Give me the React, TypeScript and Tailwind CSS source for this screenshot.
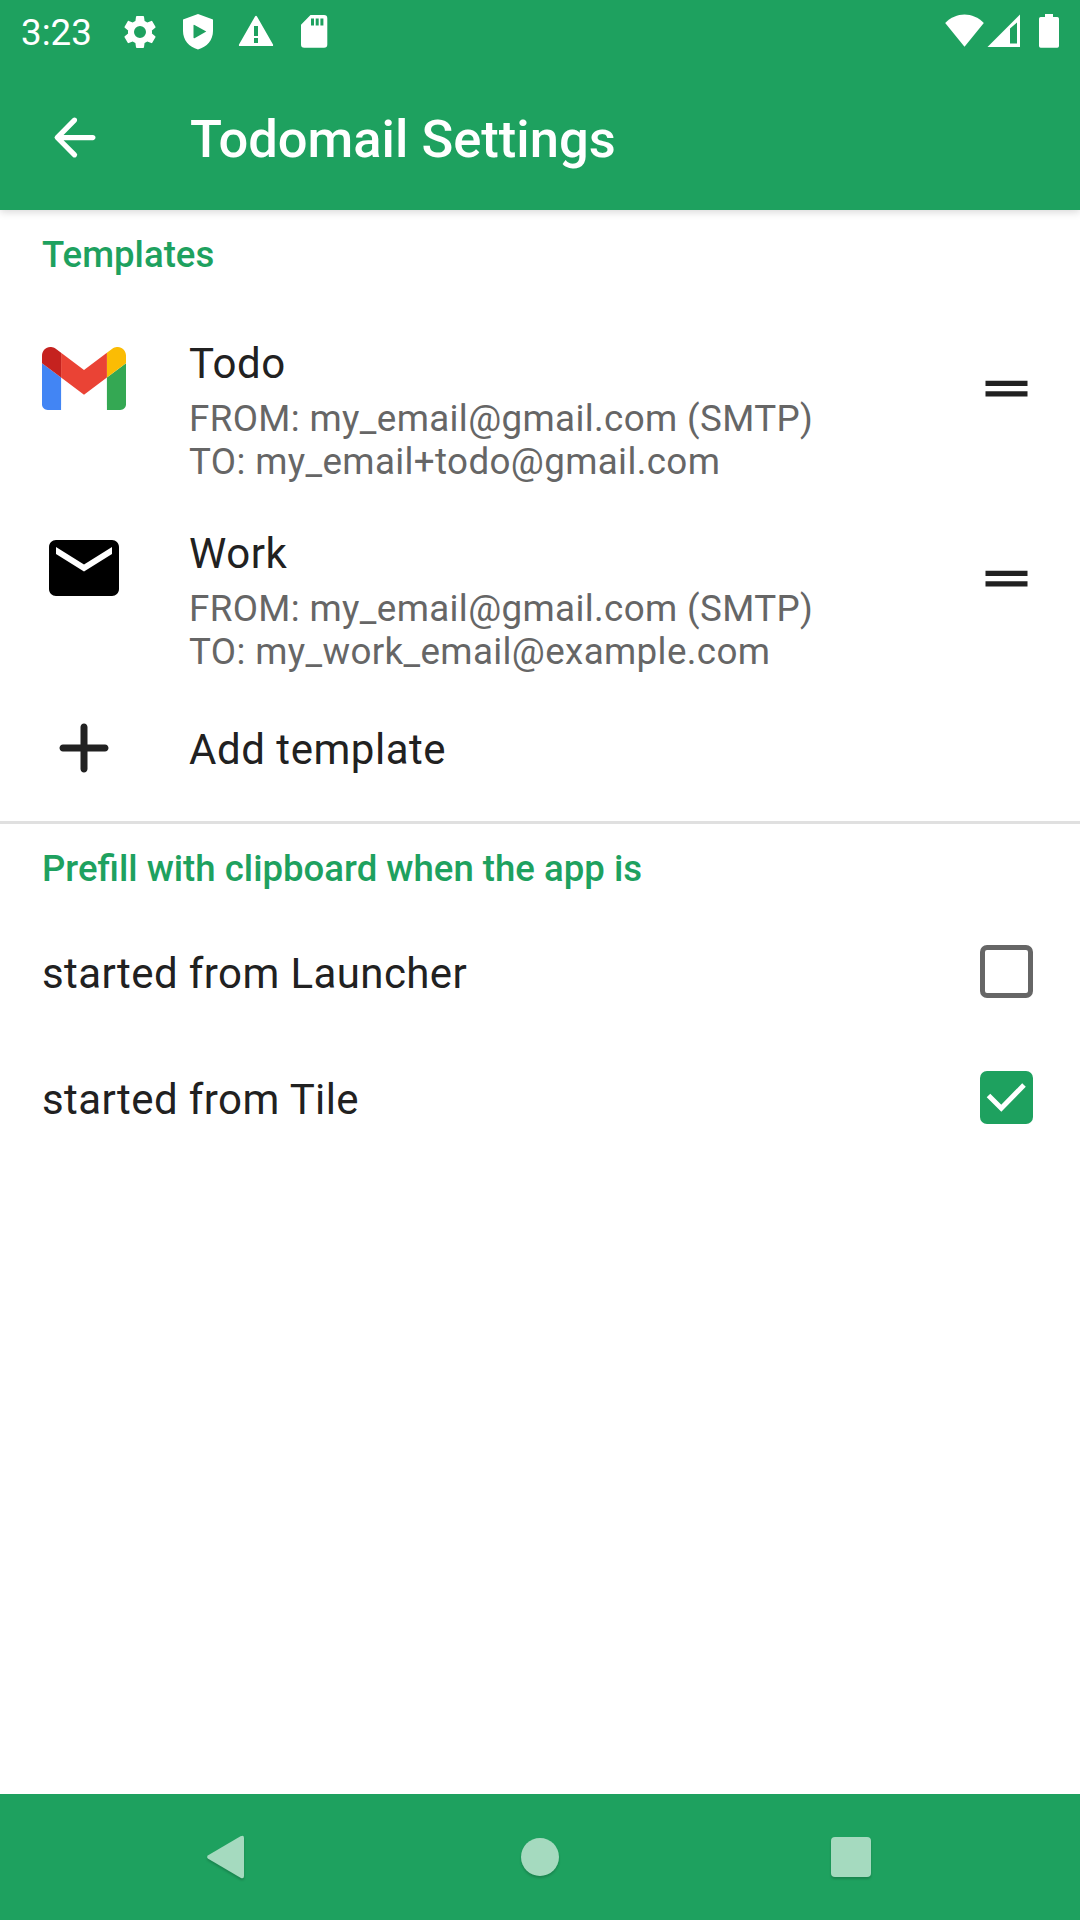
import type { ReactNode } from "react";

function StatusBar() {
  return (
    <div className="z-20 flex h-[63px] shrink-0 items-start bg-[#1ea15f] pr-[21px] pl-[21px] text-white">
      <span className="mt-[12px] w-[99px] text-[36.75px] leading-[42px]">3:23</span>
      <div className="mt-[12px] flex gap-[18px]">
        <svg className="h-10 w-10" viewBox="0 0 24 24" fill="currentColor">
          <path d="M19.14 12.94c.04-.3.06-.61.06-.94 0-.32-.02-.64-.07-.94l2.03-1.58a.49.49 0 0 0 .12-.61l-1.92-3.32a.488.488 0 0 0-.59-.22l-2.39.96c-.5-.38-1.03-.7-1.62-.94l-.36-2.54a.484.484 0 0 0-.48-.41h-3.84c-.24 0-.43.17-.47.41l-.36 2.54c-.59.24-1.13.57-1.62.94l-2.39-.96c-.22-.08-.47 0-.59.22L2.74 8.87c-.12.21-.08.47.12.61l2.03 1.58c-.05.3-.09.63-.09.94s.02.64.07.94l-2.03 1.58a.49.49 0 0 0-.12.61l1.92 3.32c.12.22.37.29.59.22l2.39-.96c.5.38 1.03.7 1.62.94l.36 2.54c.05.24.24.41.48.41h3.84c.24 0 .44-.17.47-.41l.36-2.54c.59-.24 1.13-.56 1.62-.94l2.39.96c.22.08.47 0 .59-.22l1.92-3.32c.12-.22.07-.47-.12-.61l-2.01-1.58zM12 15.6A3.6 3.6 0 1 1 12 8.4a3.6 3.6 0 0 1 0 7.2z" />
        </svg>
        <svg className="h-10 w-10" viewBox="0 0 40 40" fill="currentColor">
          <path fillRule="evenodd" d="M20 2 L5 7.5 V19 C5 28 11 35 20 37.5 C29 35 35 28 35 19 V7.500Z M15.500 13.500 Q15.500 12.500 16.500 13 L28.300 19.500 L16.500 26.200 Q15.500 26.600 15.500 25.500Z" />
        </svg>
        <svg className="h-10 w-10" viewBox="0 0 40 40" fill="currentColor">
          <path fillRule="evenodd" d="M19 4.500 Q20 3.200 21 4.500 L37 32.500 Q37.500 34 36 34 H4 Q2.500 34 3 32.500Z M18 14 V24 H22 V14Z M18 26 V31 H22 V26Z" />
        </svg>
        <svg className="h-10 w-10" viewBox="0 0 40 40" fill="currentColor">
          <path fillRule="evenodd" d="M16.500 3 H30 Q33.300 3 33.300 6.300 V32.500 Q33.300 35.800 30 35.800 H10.300 Q7 35.800 7 32.500 V12.700Z M17 6.500 V13.500 H20 V6.500Z M21.700 6.500 V13.500 H24.700 V6.500Z M26.400 6.500 V13.500 H29.400 V6.500Z" />
        </svg>
      </div>
      <div className="mt-[12px] ml-auto flex">
        <svg className="h-10 w-10" viewBox="0 0 40 40" fill="currentColor">
          <path d="M1.200 11 C12 -.5 29 -.5 39.800 11 L20.500 34.700Z" />
        </svg>
        <svg className="h-10 w-10" viewBox="0 0 40 40" fill="currentColor">
          <path fillRule="evenodd" d="M3.500 35 L36 2.500 V35Z M26 16.500 V31.500 H33 V10.500Z" />
        </svg>
        <svg className="ml-[15px] h-10 w-5" viewBox="0 0 20 40" fill="currentColor">
          <path d="M6 2 H14 V5 H18.300 Q20 5 20 6.700 V34 Q20 35.700 18.300 35.700 H1.700 Q0 35.700 0 34 V6.700 Q0 5 1.700 5 H6Z" />
        </svg>
      </div>
    </div>
  );
}

function AppBar() {
  return (
    <header className="z-10 flex h-[147px] shrink-0 items-center bg-[#1ea15f] pl-[43px] text-white shadow-[0_2px_8px_rgba(0,0,0,0.16)]">
      <svg className="mt-[2px] h-[63px] w-[63px]" viewBox="0 0 24 24" fill="currentColor">
        <path d="M19 11H7.830l4.880-4.880c.390-.390.390-1.030 0-1.420a.996.996 0 0 0-1.410 0l-6.590 6.590a.996.996 0 0 0 0 1.410l6.590 6.590a.996.996 0 1 0 1.410-1.410L7.830 13H19c.550 0 1-.450 1-1s-.450-1-1-1z" />
      </svg>
      <h1 className="mt-[5px] ml-[84px] text-[52.5px] leading-[62px] font-medium">Todomail Settings</h1>
    </header>
  );
}

function GmailIcon() {
  return (
    <svg className="mt-px h-[63px] w-[84px]" viewBox="52 42 88 66">
      <path fill="#4285f4" d="M58 108h14V74L52 59v43c0 3.320 2.690 6 6 6" />
      <path fill="#34a853" d="M120 108h14c3.320 0 6-2.690 6-6V59l-20 15" />
      <path fill="#fbbc04" d="M120 48v26l20-15v-8c0-7.420-8.470-11.650-14.400-7.200" />
      <path fill="#ea4335" d="M72 74V48l24 18 24-18v26L96 92" />
      <path fill="#c5221f" d="M52 51v8l20 15V48l-5.600-4.200c-5.940-4.450-14.400-.220-14.400 7.200" />
    </svg>
  );
}

function MailIcon() {
  return (
    <svg className="h-[84px] w-[84px]" viewBox="0 0 24 24">
      <path d="M20 4H4c-1.100 0-1.990.900-1.990 2L2 18c0 1.100.900 2 2 2h16c1.100 0 2-.900 2-2V6c0-1.100-.900-2-2-2zm0 4l-8 5-8-5V6l8 5 8-5v2z" />
    </svg>
  );
}

function TemplateRow({ icon, name, from, to }: { icon: ReactNode; name: string; from: string; to: string }) {
  return (
    <div className="flex h-[190px] items-start px-[42px]">
      <div className="mt-[21px] mr-[63px] flex h-[84px] w-[84px] items-center justify-center">{icon}</div>
      <div className="mt-[24px] flex-1">
        <div className="text-[42px] leading-[49px] tracking-[0.54px]">{name}</div>
        <div className="mt-[9px] text-[36.75px] leading-[43px] tracking-[0.36px] text-[#666666]">
          <div>FROM: {from}</div>
          <div>TO: {to}</div>
        </div>
      </div>
      <svg className="mt-[42px] h-[63px] w-[63px]" viewBox="0 0 24 24" fill="#212121">
        <path d="M20 9H4v2h16V9zM4 15h16v-2H4v2z" />
      </svg>
    </div>
  );
}

function SettingRow({ label, checked }: { label: string; checked: boolean }) {
  return (
    <label className="flex h-[126px] items-start justify-between pr-[47px] pl-[42px]">
      <span className="mt-[40px] text-[42px] leading-[49px] tracking-[0.4px]">{label}</span>
      {checked ? (
        <span className="mt-[36px] h-[53px] w-[53px] rounded-[7px] bg-[#1ea15f]">
          <svg className="h-[53px] w-[53px]" viewBox="0 0 53 53" fill="none" stroke="white" strokeWidth="5">
            <path d="M8.500 24.500 L21.300 37.300 L44 14" />
          </svg>
        </span>
      ) : (
        <span className="mt-[36px] h-[53px] w-[53px] rounded-[7px] border-5 border-[#666666]" />
      )}
    </label>
  );
}

function NavigationBar() {
  return (
    <nav className="flex h-[126px] shrink-0 items-center justify-between bg-[#1ea15f] px-[198px] text-[#a5dabf]">
      <svg className="h-[54px] w-[54px] drop-shadow-[0_2px_1px_rgba(0,0,0,0.18)]" viewBox="0 0 54 54" fill="currentColor">
        <path d="M10.200 25.200 L42.500 6.200 Q46 4.500 46 8 V46 Q46 49.500 42.500 47.800 L10.200 28.800 Q8 27 10.200 25.200Z" />
      </svg>
      <span className="mr-[3px] h-[38px] w-[38px] rounded-full bg-current drop-shadow-[0_2px_1px_rgba(0,0,0,0.18)]" />
      <span className="mr-[11px] h-10 w-10 rounded-[4px] bg-current drop-shadow-[0_2px_1px_rgba(0,0,0,0.18)]" />
    </nav>
  );
}

export default function App() {
  return (
    <div className="flex h-[1920px] w-[1080px] flex-col overflow-hidden bg-white font-[Roboto,sans-serif] text-[#212121]">
      <StatusBar />
      <AppBar />
      <main className="flex-1">
        <section className="h-[611px]">
          <h2 className="h-[105px] pt-[24px] pl-[42px] text-[36.6px] leading-[42px] font-medium text-[#1ea15f]">
            Templates
          </h2>
          <TemplateRow icon={<GmailIcon />} name="Todo" from="my_email@gmail.com (SMTP)" to="my_email+todo@gmail.com" />
          <TemplateRow icon={<MailIcon />} name="Work" from="my_email@gmail.com (SMTP)" to="my_work_email@example.com" />
          <div className="flex h-[126px] items-start pl-[42px]">
            <svg className="mt-[11px] mr-[63px] h-[84px] w-[84px]" viewBox="0 0 24 24" fill="#212121">
              <path d="M18 13h-5v5c0 .550-.450 1-1 1s-1-.450-1-1v-5H6c-.550 0-1-.450-1-1s.450-1 1-1h5V6c0-.550.450-1 1-1s1 .450 1 1v5h5c.550 0 1 .450 1 1s-.450 1-1 1z" />
            </svg>
            <span className="mt-[30px] text-[42px] leading-[49px] tracking-[0.54px]">Add template</span>
          </div>
        </section>
        <section className="border-t-3 border-[#e0e0e0]">
          <h2 className="h-[85px] pt-[24px] pl-[42px] text-[36.6px] leading-[42px] font-medium text-[#1ea15f]">
            Prefill with clipboard when the app is
          </h2>
          <SettingRow label="started from Launcher" checked={false} />
          <SettingRow label="started from Tile" checked />
        </section>
      </main>
      <NavigationBar />
    </div>
  );
}
